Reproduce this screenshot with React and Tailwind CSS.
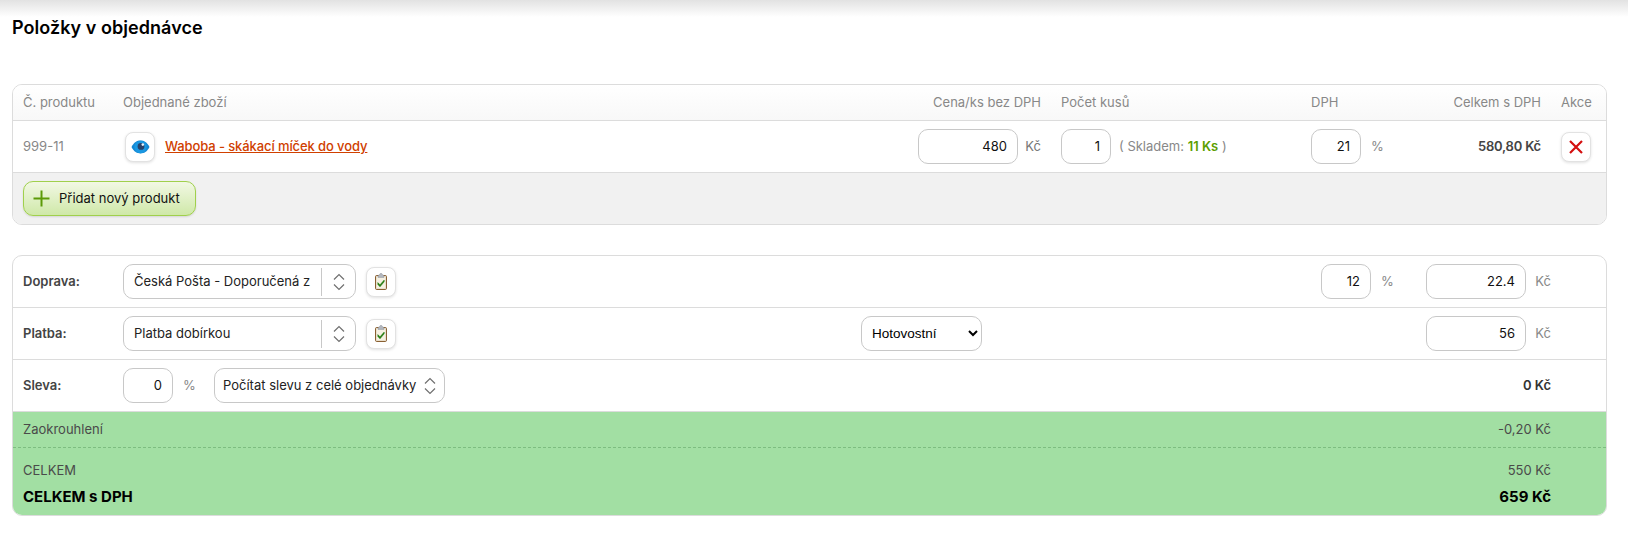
const font = { fontFamily: 'Inter, "Liberation Sans", sans-serif' };

function Chevrons({ className = "" }) {
  return (
    <svg width="12" height="18" viewBox="0 0 12 18" fill="none" stroke="#707070" strokeWidth="1.2" className={className}>
      <path d="M1 6.5 L6 1.5 L11 6.5" />
      <path d="M1 11.5 L6 16.5 L11 11.5" />
    </svg>
  );
}

function Eye() {
  return (
    <svg width="19" height="14" viewBox="0 0 19 14">
      <path d="M0.5 7 C3 2.2 6 0.6 9.5 0.6 C13 0.6 16 2.2 18.5 7 C16 11.8 13 13.4 9.5 13.4 C6 13.4 3 11.8 0.5 7 Z" fill="#1487d2" />
      <circle cx="9.5" cy="7" r="6.2" fill="#1a98e2" />
      <circle cx="10" cy="6.4" r="3.4" fill="#28426a" />
      <circle cx="11.8" cy="4.6" r="1.3" fill="#e8f4fc" />
    </svg>
  );
}

function Clipboard() {
  return (
    <svg width="12" height="17" viewBox="0 0 12 17">
      <rect x="0.6" y="2.6" width="10.8" height="13.8" rx="0.8" fill="#f6f1e2" stroke="#7d4f1c" strokeWidth="1" />
      <path d="M3 3.2 C3 2 4 1.9 4.5 1.7 C4.7 0.8 5.3 0.4 6 0.4 C6.7 0.4 7.3 0.8 7.5 1.7 C8 1.9 9 2 9 3.2 L9 4.4 L3 4.4 Z" fill="#b4b8be" stroke="#8d9198" strokeWidth="0.5" />
      <path d="M2.8 9.6 L5 11.8 L9.2 7 L9.2 8.8 L5 13.8 L2.8 11.4 Z" fill="#217a0c" stroke="#217a0c" strokeWidth="0.5" />
    </svg>
  );
}

function IconButton({ children }) {
  return (
    <button className="w-[30px] h-[30px] flex items-center justify-center bg-white border border-[#e2e2e2] rounded-lg shadow-[0_1px_3px_rgba(0,0,0,0.12)]">
      {children}
    </button>
  );
}

function NumInput({ value, className }) {
  return (
    <input
      defaultValue={value}
      style={font}
      className={`h-[35px] border border-[#c8c8c8] rounded-[10px] bg-white text-right pr-[10px] pb-[1px] text-[13px] text-[#111] outline-none ${className}`}
    />
  );
}

function FancySelect({ text, width, divided }) {
  return (
    <div className={`h-[35px] flex items-center border border-[#c8c8c8] rounded-[10px] bg-white text-[13px] text-[#222] ${width}`}>
      {divided ? (
        <>
          <span className="pl-[10px] flex-1 overflow-hidden whitespace-nowrap">{text}</span>
          <span className="w-px h-[28px] bg-[#c8c8c8]" />
          <span className="w-[33px] flex justify-center"><Chevrons /></span>
        </>
      ) : (
        <>
          <span className="pl-[8px] flex-1 whitespace-nowrap">{text}</span>
          <span className="pr-[8px] flex"><Chevrons /></span>
        </>
      )}
    </div>
  );
}

const itemGrid = "grid grid-cols-[80px_775px_123px_230px_90px_120px_35px] gap-x-5 px-[10px] items-center";
const feeGrid = "grid grid-cols-[100px_738px_121px_339px_105px_125px_45px] px-[10px] items-center h-[52px] border-b border-[#dcdcdc]";

export default function App() {
  return (
    <div style={font} className="bg-white w-[1628px] h-[535px] overflow-hidden text-[13px]">
      <div className="h-[17px] bg-gradient-to-b from-[#e2e2e2] to-white" />
      <h1 className="px-3 pb-[2px] text-[18px] tracking-[0.05px] leading-[22px] font-semibold text-black">Položky v objednávce</h1>

      <section className="mx-3 mt-[43px] w-[1595px] border border-[#dcdcdc] rounded-[10px] overflow-hidden">
        <div className={`${itemGrid} h-[36px] bg-gradient-to-b from-white to-[#f8f8f8] border-b border-[#dcdcdc] text-[#888]`}>
          <span>Č. produktu</span>
          <span>Objednané zboží</span>
          <span className="text-right">Cena/ks bez DPH</span>
          <span>Počet kusů</span>
          <span>DPH</span>
          <span className="text-right">Celkem s DPH</span>
          <span>Akce</span>
        </div>
        <div className={`${itemGrid} h-[52px] border-b border-[#dcdcdc]`}>
          <span className="text-[#888]">999-11</span>
          <div className="flex items-center gap-[10px] pl-[2px]">
            <IconButton><Eye /></IconButton>
            <a className="font-medium tracking-[-0.1px] text-[#d04000] underline">Waboba - skákací míček do vody</a>
          </div>
          <div className="flex items-center justify-between">
            <NumInput value="480" className="w-[100px]" />
            <span className="text-[#777]">Kč</span>
          </div>
          <div className="flex items-center gap-[8px]">
            <NumInput value="1" className="w-[50px]" />
            <span className="text-[#888]">( Skladem: <b className="font-semibold text-[#5c9e00]">11 Ks</b> )</span>
          </div>
          <div className="flex items-center gap-[10px]">
            <NumInput value="21" className="w-[50px]" />
            <span className="text-[#888]">%</span>
          </div>
          <span className="text-right font-semibold text-[#444] tracking-[-0.2px]">580,80 Kč</span>
          <IconButton>
            <svg width="14" height="14" viewBox="0 0 14 14" stroke="#d40f0f" strokeWidth="2.2" fill="none">
              <path d="M1 1 L13 13 M13 1 L1 13" />
            </svg>
          </IconButton>
        </div>
        <div className="h-[51px] bg-[#f1f1f1] px-[10px] flex items-center">
          <button className="h-[35px] w-[173px] flex items-center gap-[9px] pl-[9px] border border-[#a0d04c] rounded-[10px] bg-gradient-to-b from-[#f2f8e4] to-[#cfe8a8] shadow-[0_1px_2px_rgba(0,0,0,0.12)] text-[#111]">
            <svg width="17" height="17" viewBox="0 0 17 17" stroke="#5c9a08" strokeWidth="2">
              <path d="M8.5 0.5 V16.5 M0.5 8.5 H16.5" />
            </svg>
            Přidat nový produkt
          </button>
        </div>
      </section>

      <section className="mx-3 mt-[30px] w-[1595px] border border-[#dcdcdc] rounded-[10px] overflow-hidden">
        <div className={feeGrid}>
          <b className="font-semibold text-[#444]">Doprava:</b>
          <div className="flex items-center gap-[10px]">
            <FancySelect text="Česká Pošta - Doporučená z" width="w-[233px]" divided />
            <IconButton><Clipboard /></IconButton>
          </div>
          <span />
          <span />
          <div className="flex items-center gap-[10px]">
            <NumInput value="12" className="w-[50px]" />
            <span className="text-[#888]">%</span>
          </div>
          <div className="flex items-center justify-between">
            <NumInput value="22.4" className="w-[100px]" />
            <span className="text-[#888]">Kč</span>
          </div>
          <span />
        </div>
        <div className={feeGrid}>
          <b className="font-semibold text-[#444]">Platba:</b>
          <div className="flex items-center gap-[10px]">
            <FancySelect text="Platba dobírkou" width="w-[233px]" divided />
            <IconButton><Clipboard /></IconButton>
          </div>
          <select
            defaultValue="Hotovostní"
            style={{ fontFamily: '"Liberation Sans", Arial, sans-serif' }}
            className="h-[35px] w-[121px] border border-[#c8c8c8] rounded-[10px] bg-white pl-[6px] text-[13.5px] text-black appearance-auto"
          >
            <option>Hotovostní</option>
          </select>
          <span />
          <span />
          <div className="flex items-center justify-between">
            <NumInput value="56" className="w-[100px]" />
            <span className="text-[#888]">Kč</span>
          </div>
          <span />
        </div>
        <div className="h-[52px] border-b border-[#dcdcdc] px-[10px] pr-[55px] flex items-center">
          <b className="w-[100px] font-semibold text-[#444]">Sleva:</b>
          <NumInput value="0" className="w-[50px]" />
          <span className="ml-[10px] w-[31px] text-[#888]">%</span>
          <FancySelect text="Počítat slevu z celé objednávky" width="w-[231px]" />
          <b className="ml-auto font-semibold text-[#333]">0 Kč</b>
        </div>
        <div className="bg-[#a2dfa3]">
          <div className="h-[36px] pt-[1px] px-[10px] pr-[55px] flex items-center justify-between border-b border-dashed border-[#7dbd80] text-[#4a4a4a]">
            <span>Zaokrouhlení</span>
            <span>-0,20 Kč</span>
          </div>
          <div className="h-[36px] pt-[9px] px-[10px] pr-[55px] flex items-center justify-between text-[#4a4a4a]">
            <span>CELKEM</span>
            <span>550 Kč</span>
          </div>
          <div className="h-[31px] pb-[4px] px-[10px] pr-[55px] flex items-center justify-between text-[15px] font-bold text-black">
            <span>CELKEM s DPH</span>
            <span>659 Kč</span>
          </div>
        </div>
      </section>
    </div>
  );
}
